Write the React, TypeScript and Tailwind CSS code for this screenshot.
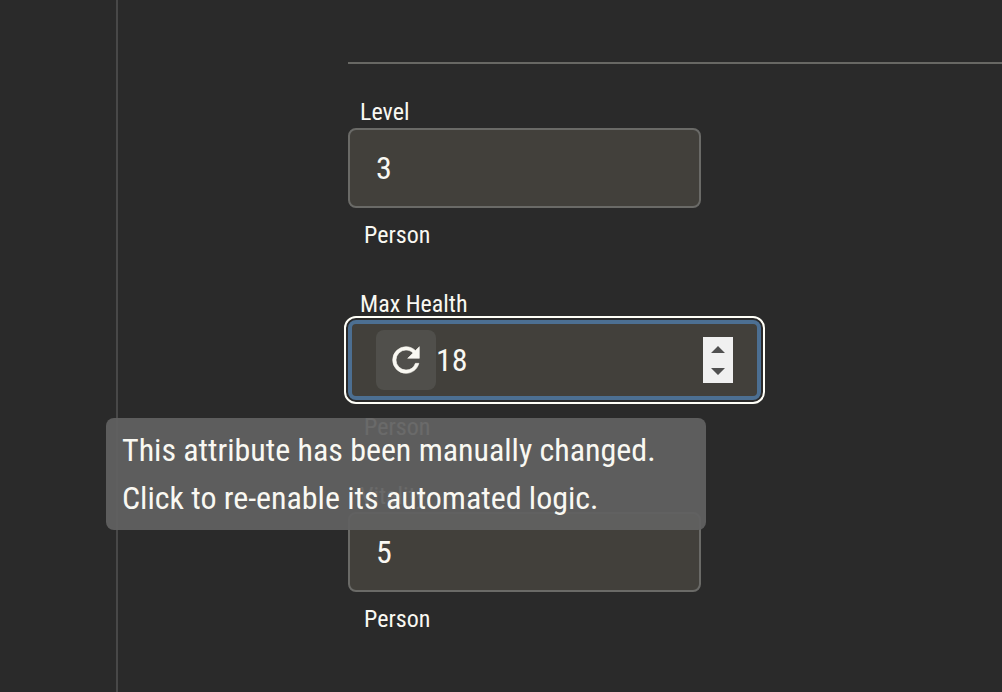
import type { ReactNode } from "react";

const font =
  "font-['Roboto_Condensed','Roboto',sans-serif] [font-stretch:75%]";

function Field({ label, children }: { label: string; children: ReactNode }) {
  return (
    <div className="flex h-48 flex-col">
      <div className="h-8 pl-3 text-2xl leading-8">{label}</div>
      {children}
      <div className="mt-[11px] pl-4 text-2xl leading-8">Person</div>
    </div>
  );
}

function Box({ value }: { value: string }) {
  return (
    <div className="flex h-20 w-[353px] shrink-0 items-center rounded-lg border-2 border-[#6a6a67] bg-[#42403b] pl-[26px] text-[32px]">
      {value}
    </div>
  );
}

export default function App() {
  return (
    <div className={`relative flex h-[692px] w-[1002px] overflow-hidden bg-[#2a2a2a] text-[#f9f8f2] antialiased ${font}`}>
      <aside className="w-[118px] shrink-0 border-r-2 border-[#484848]" />
      <main className="flex-1 pl-[230px] pt-[62px]">
        <div className="mb-8 h-0.5 bg-[#686864]" />
        <Field label="Level">
          <Box value="3" />
        </Field>
        <Field label="Max Health">
          <div className="flex h-20 w-[413px] shrink-0 items-center rounded-lg border-4 border-[#4c6f92] bg-[#42403b] pl-6 pr-6 text-[32px] outline-2 outline-offset-2 outline-[#fffff8]">
            <button className="flex size-[60px] items-center justify-center rounded-lg bg-[#504f4b]">
              <svg viewBox="0 0 24 24" className="size-10" fill="currentColor" stroke="currentColor" strokeWidth="0.35">
                <path d="M17.65 6.35C16.2 4.9 14.21 4 12 4a8 8 0 0 0-8 8 8 8 0 0 0 8 8c3.73 0 6.84-2.55 7.73-6h-2.08A5.99 5.99 0 0 1 12 18a6 6 0 0 1-6-6 6 6 0 0 1 6-6c1.66 0 3.14.69 4.22 1.78L13 11h7V4l-2.35 2.35Z" />
              </svg>
            </button>
            <span className="flex-1">18</span>
            <svg viewBox="0 0 30 46" className="h-[46px] w-[30px]">
              <path d="M0 0h30v46H0z" fill="#f0f0f0" />
              <path d="M8 16h14l-7-7zM8 31h14l-7 7z" fill="#505050" />
            </svg>
          </div>
        </Field>
        <Field label="Vitality">
          <Box value="5" />
        </Field>
      </main>
      <div className="absolute left-[106px] top-[418px] h-28 w-[600px] rounded-lg bg-[#616161]/94 px-4 py-2 text-[32px] leading-[48px] tracking-[-0.02px]">
        <div>This attribute has been manually changed.</div>
        <div>Click to re-enable its automated logic.</div>
      </div>
    </div>
  );
}
